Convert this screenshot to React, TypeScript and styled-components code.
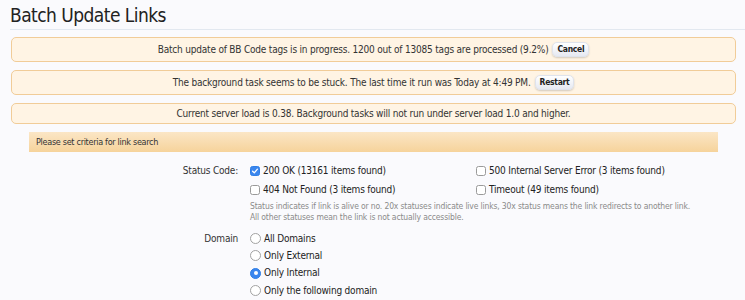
import React from "react";
import styled, { createGlobalStyle } from "styled-components";

const FONT = `"DejaVu Sans Condensed", "DejaVu Sans", "Liberation Sans", sans-serif`;

const Global = createGlobalStyle`
  html, body { margin: 0; padding: 0; background: #fafafd; }
  body { font-family: ${FONT}; color: #333; }
`;

const Page = styled.div`
  padding: 0 0 0 10px;
`;

const TitleBar = styled.div`
  border-bottom: 1px solid #e2e8f0;
  padding: 4px 0 3px 0;
`;

const Title = styled.h1`
  margin: 0;
  font-size: 19px;
  font-weight: normal;
  letter-spacing: -0.55px;
  color: #222;
  line-height: 22px;
`;

const Messages = styled.div`
  margin: 7px 9px 0 1px;
  display: flex;
  flex-direction: column;
  gap: 8px;
`;

const Notice = styled.div`
  border: 1px solid #f1cc98;
  background: #fff4e4;
  border-radius: 5px;
  text-align: center;
  font-size: 10px;
  letter-spacing: -0.2px;
  line-height: 17px;
  padding: 1px 8px;
  color: #333;
`;

const SmallButton = styled.button`
  font-family: ${FONT};
  font-size: 8.5px;
  font-weight: bold;
  letter-spacing: -0.3px;
  color: #222;
  height: 15px;
  line-height: 13px;
  padding: 0 4px;
  margin: 3px 0 3px 4px;
  border: 1px solid #dfe3ec;
  border-radius: 5px;
  background: linear-gradient(#ffffff, #e6e9f2);
  box-shadow: 0 1px 2px rgba(0, 0, 0, 0.18);
  vertical-align: middle;
  cursor: pointer;
`;

const Section = styled.div`
  margin: 8px 27px 0 19px;
`;

const SectionHeader = styled.div`
  height: 20px;
  line-height: 20px;
  padding: 0 7px;
  font-size: 9px;
  letter-spacing: -0.3px;
  color: #333;
  background: linear-gradient(#fbe6c6, #f6d39b);
`;

const Form = styled.div`
  padding-top: 10px;
  display: flex;
  flex-direction: column;
`;

const Row = styled.div<{ $gap?: number }>`
  display: grid;
  grid-template-columns: 209px 1fr;
  column-gap: 12px;
  margin-top: ${(p) => p.$gap ?? 0}px;
`;

const Label = styled.div`
  text-align: right;
  font-size: 10px;
  letter-spacing: -0.2px;
  line-height: 18px;
  color: #333;
`;

const Controls = styled.div`
  display: flex;
  flex-direction: column;
`;

const CheckGrid = styled.div`
  display: grid;
  grid-template-columns: 226px 1fr;
  row-gap: 1px;
`;

const Option = styled.label`
  display: flex;
  align-items: center;
  gap: 3px;
  font-size: 10px;
  letter-spacing: -0.2px;
  line-height: 18px;
  height: 18px;
  color: #222;
`;

const RadioOption = styled(Option)`
  height: 17.3px;
`;

const Box = styled.span<{ $checked?: boolean }>`
  width: 10px;
  height: 10px;
  box-sizing: border-box;
  border-radius: 2.5px;
  border: 1px solid ${(p) => (p.$checked ? "#2f7fe6" : "#9a9a9a")};
  background: ${(p) => (p.$checked ? "#3b86ee" : "#fff")};
  display: inline-flex;
  align-items: center;
  justify-content: center;
  flex-shrink: 0;
`;

const Radio = styled.span<{ $checked?: boolean }>`
  width: 11px;
  height: 11px;
  box-sizing: border-box;
  border-radius: 50%;
  border: 1px solid ${(p) => (p.$checked ? "#2f7fe6" : "#a2a2a2")};
  background: ${(p) => (p.$checked ? "#3b86ee" : "#fff")};
  display: inline-flex;
  align-items: center;
  justify-content: center;
  flex-shrink: 0;
  &::after {
    content: "";
    display: ${(p) => (p.$checked ? "block" : "none")};
    width: 4px;
    height: 4px;
    border-radius: 50%;
    background: #fff;
  }
`;

const Explain = styled.div`
  font-size: 8.5px;
  letter-spacing: -0.15px;
  line-height: 11px;
  color: #8a8a8a;
  margin-top: 2px;
`;

const Check = ({ checked }: { checked?: boolean }) => (
  <Box $checked={checked}>
    {checked && (
      <svg width="8" height="8" viewBox="0 0 8 8">
        <path d="M1.6 4.2 L3.3 5.8 L6.4 2.2" fill="none" stroke="#fff" strokeWidth="1.3" strokeLinecap="round" strokeLinejoin="round" />
      </svg>
    )}
  </Box>
);

export default function App() {
  return (
    <>
      <Global />
      <Page>
        <TitleBar>
          <Title>Batch Update Links</Title>
        </TitleBar>
        <Messages>
          <Notice>
            Batch update of BB Code tags is in progress. 1200 out of 13085 tags are processed (9.2%)
            <SmallButton>Cancel</SmallButton>
          </Notice>
          <Notice>
            The background task seems to be stuck. The last time it run was Today at 4:49 PM.
            <SmallButton>Restart</SmallButton>
          </Notice>
          <Notice>
            Current server load is 0.38. Background tasks will not run under server load 1.0 and higher.
          </Notice>
        </Messages>
        <Section>
          <SectionHeader>Please set criteria for link search</SectionHeader>
          <Form>
            <Row>
              <Label>Status Code:</Label>
              <Controls>
                <CheckGrid>
                  <Option><Check checked />200 OK (13161 items found)</Option>
                  <Option><Check />500 Internal Server Error (3 items found)</Option>
                  <Option><Check />404 Not Found (3 items found)</Option>
                  <Option><Check />Timeout (49 items found)</Option>
                </CheckGrid>
                <Explain>
                  Status indicates if link is alive or no. 20x statuses indicate live links, 30x status means the link redirects to another link.
                  <br />
                  All other statuses mean the link is not actually accessible.
                </Explain>
              </Controls>
            </Row>
            <Row $gap={7}>
              <Label>Domain</Label>
              <Controls>
                <RadioOption><Radio />All Domains</RadioOption>
                <RadioOption><Radio />Only External</RadioOption>
                <RadioOption><Radio $checked />Only Internal</RadioOption>
                <RadioOption><Radio />Only the following domain</RadioOption>
              </Controls>
            </Row>
          </Form>
        </Section>
      </Page>
    </>
  );
}
